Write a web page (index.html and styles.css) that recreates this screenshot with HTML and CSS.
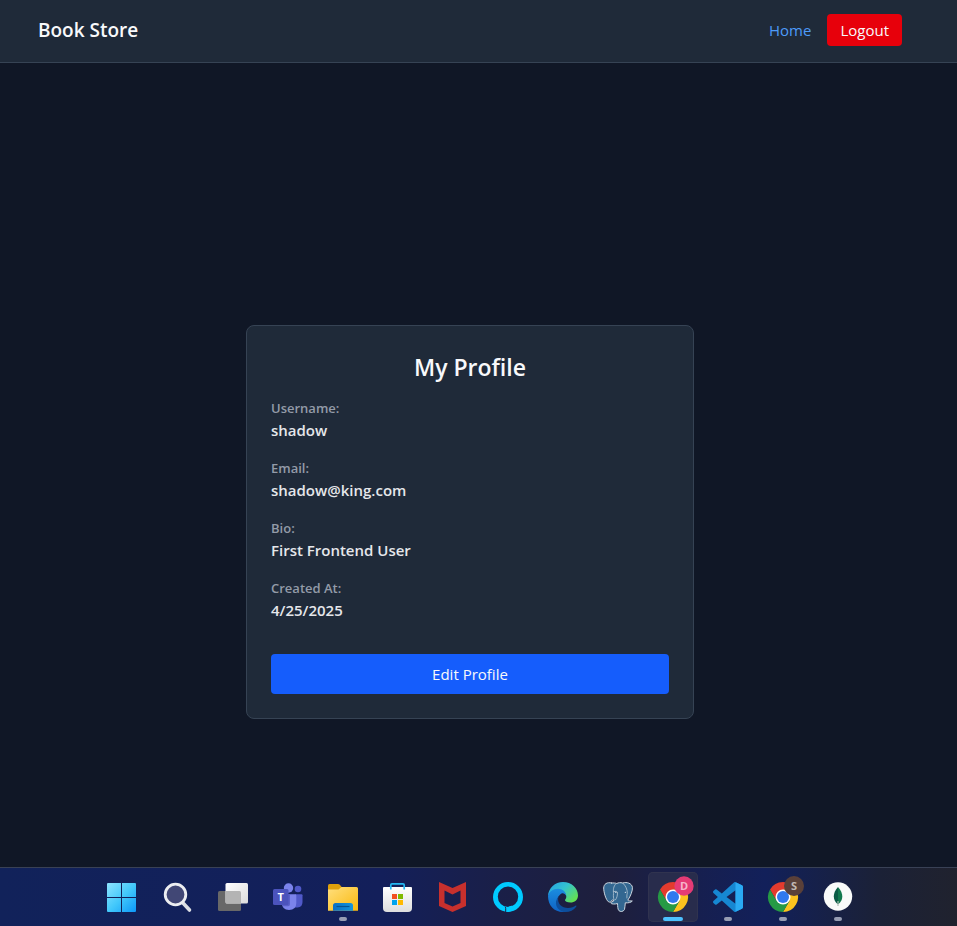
FILE: index.html
```html
<!DOCTYPE html>
<html lang="en">
<head>
<meta charset="utf-8">
<meta name="viewport" content="width=device-width, initial-scale=1">
<title>Book Store</title>
<link rel="stylesheet" href="styles.css">
</head>
<body>
<header class="site-header">
  <h1 class="brand">Book Store</h1>
  <nav class="site-nav">
    <a class="nav-link" href="#">Home</a>
    <button class="logout" type="button">Logout</button>
  </nav>
</header>

<main class="content">
  <section class="card">
    <h2 class="card-title">My Profile</h2>
    <dl class="details">
      <div><dt>Username:</dt><dd>shadow</dd></div>
      <div><dt>Email:</dt><dd>shadow@king.com</dd></div>
      <div><dt>Bio:</dt><dd>First Frontend User</dd></div>
      <div><dt>Created At:</dt><dd>4/25/2025</dd></div>
    </dl>
    <button class="edit" type="button">Edit Profile</button>
  </section>
</main>

<footer class="taskbar">
  <button class="task" type="button" aria-label="Start">
    <svg viewBox="0 0 50 50">
      <defs><linearGradient id="win" gradientUnits="userSpaceOnUse" x1="10" y1="11" x2="39" y2="40"><stop offset="0" stop-color="#8be3ff"/><stop offset=".5" stop-color="#42c8fb"/><stop offset="1" stop-color="#0a96f8"/></linearGradient></defs>
      <path fill="url(#win)" d="M10 11h13v14H9V12q0-1 1-1zM24 11h13q1 0 1 1v13H24zM9 26h14v14H10q-1 0-1-1zM24 26h14v13q0 1-1 1H24z"/>
    </svg>
  </button>
  <button class="task" type="button" aria-label="Search">
    <svg viewBox="0 0 50 50">
      <path d="M30 31l6.500 7" stroke="#dcdfe4" stroke-width="3.600" stroke-linecap="round"/>
      <circle cx="22.500" cy="22.500" r="10.300" fill="#414775" stroke="#eceef1" stroke-width="2.800"/>
    </svg>
  </button>
  <button class="task" type="button" aria-label="Task view">
    <svg viewBox="0 0 50 50">
      <defs><linearGradient id="tvw" x1="0" y1="0" x2="1" y2="1"><stop offset="0" stop-color="#fff"/><stop offset="1" stop-color="#dcdcdc"/></linearGradient></defs>
      <rect x="10" y="19" width="23" height="20" rx="1.500" fill="#686868"/>
      <rect x="17.500" y="11" width="22.500" height="20.500" rx="1.500" fill="url(#tvw)"/>
      <path fill="#b4b4b4" d="M17.500 19H31.500q1.500 0 1.500 1.500v11H19q-1.500 0-1.500-1.500z"/>
    </svg>
  </button>
  <button class="task" type="button" aria-label="Teams">
    <svg viewBox="0 0 50 50">
      <circle cx="35" cy="17" r="3.300" fill="#5059c9"/>
      <path fill="#5059c9" d="M32 22.300h6.500q1 0 1 1V30q0 5-5 5.500h-3z"/>
      <circle cx="25.500" cy="16" r="4.700" fill="#7b83eb"/>
      <path fill="#7b83eb" d="M19 22.300h13q1.300 0 1.300 1.300v7.400q0 7-7.300 7-7 0-7-7z"/>
      <path fill="#5a61c8" d="M19 22.300h8v10q0 2-2 2h-5.500q-.5-1.500-.5-3z"/>
      <rect x="10" y="17" width="15.500" height="16" rx="1.500" fill="#4b53bc"/>
      <text class="glyph" x="17.700" y="29" font-size="11">T</text>
    </svg>
  </button>
  <button class="task running" type="button" aria-label="File Explorer">
    <svg viewBox="0 0 50 50">
      <defs><linearGradient id="fold" x1="0" y1="0" x2="1" y2="1"><stop offset="0" stop-color="#ffdf7e"/><stop offset="1" stop-color="#fab90e"/></linearGradient><linearGradient id="fblue" x1="0" y1="0" x2="1" y2="0"><stop offset="0" stop-color="#0a6fc7"/><stop offset="1" stop-color="#1495dc"/></linearGradient></defs>
      <path fill="#dfa00b" d="M10 13.500Q10 12 11.500 12H20q1 0 1.800.8L24 15.500V21H10z"/>
      <path fill="url(#fold)" d="M10 17.500h10.500l3-2.500h15q1.500 0 1.500 1.500v22.200H10z"/>
      <path fill="url(#fblue)" d="M15 38.700V33.500q0-2.500 2.500-2.500h15q2.500 0 2.500 2.500v5.200z"/>
      <path d="M18.500 34.500h13" stroke="#075493" stroke-width="1.200"/>
    </svg>
  </button>
  <button class="task" type="button" aria-label="Store">
    <svg viewBox="0 0 50 50">
      <defs><linearGradient id="bag" x1="0" y1="0" x2="0" y2="1"><stop offset="0" stop-color="#fff"/><stop offset="1" stop-color="#dedede"/></linearGradient></defs>
      <path fill="url(#bag)" d="M11 15h27q1 0 1 1v20q0 4-4 4H14q-4 0-4-4V16q0-1 1-1z"/>
      <path d="M17.800 17.500V13q0-1.200 1.200-1.200h11Q31.200 11.800 31.200 13v4.500" fill="none" stroke="#25b9f2" stroke-width="1.700"/>
      <path fill="#f25022" d="M19 22h5v5h-5z"/><path fill="#7fba00" d="M25 22h5v5h-5z"/><path fill="#00a4ef" d="M19 28h5v5h-5z"/><path fill="#ffb900" d="M25 28h5v5h-5z"/>
    </svg>
  </button>
  <button class="task" type="button" aria-label="McAfee">
    <svg viewBox="0 0 50 50">
      <path fill="#c7302d" fill-rule="evenodd" d="M11 10l13.500 6L38 10v24l-13.500 6L11 34zM16.500 18.500V31l8 3.500 8-3.500V18.500l-8 4z"/>
    </svg>
  </button>
  <button class="task" type="button" aria-label="Alexa">
    <svg viewBox="0 0 50 50">
      <path fill="#00caff" fill-rule="evenodd" d="M25 10a15 15 0 1 1 0 30a15 15 0 1 1 0-30zM25 14.600a10.200 10.200 0 1 0 0 20.400a10.200 10.200 0 1 0 0-20.400z"/>
      <path fill="#00caff" d="M23 40v-3q0-1.500 1.500-2l5-1.500-2 6z"/>
      <path d="M21.800 34.500q.9.400.9 1.800v4" stroke="#1b1f46"/>
    </svg>
  </button>
  <button class="task" type="button" aria-label="Edge">
    <svg viewBox="0 0 50 50">
      <defs>
        <linearGradient id="eg" x1="0" y1="0" x2="1" y2=".7"><stop offset="0" stop-color="#239fe8"/><stop offset=".5" stop-color="#34c2cf"/><stop offset="1" stop-color="#63e052"/></linearGradient>
        <linearGradient id="eb" x1="0" y1="0" x2="0" y2="1"><stop offset="0" stop-color="#1b8de0"/><stop offset="1" stop-color="#0f62c4"/></linearGradient>
      </defs>
      <path fill="url(#eg)" d="M10 24C10.500 16 17 10 25 10c8.500 0 15 6 15 13.500 0 4.500-3.500 7-7.500 7-3.500 0-5.500-1.300-5.500-2.300s1.300-1.500 1.300-3.500c0-3.200-3.300-6.200-8.300-6.200-5 0-8.500 2.500-10 5.500z"/>
      <path fill="url(#eb)" d="M10 24c1-4.300 5-7.300 10-7.300 4.500 0 8.300 3 8.300 7.500-1-2.500-3-3.200-4.800-2.700-4 2.500-5 6.500-4 10s3.500 7 7.500 8.400C17 41 10 34 10 24z"/>
      <path fill="#0d4e9c" d="M20.500 24.500c-2 7 3.500 11.500 9.500 11.500 3.500 0 6-1.300 7.500-2.300.7-.3 1.200.3.700 1C35.500 38.500 31 40.500 26 40c-7-1.500-11-9-5.500-15.500z"/>
    </svg>
  </button>
  <button class="task" type="button" aria-label="PostgreSQL">
    <svg viewBox="0 0 50 50" stroke-linejoin="round" stroke-linecap="round">
      <path fill="#336791" stroke="#cdd6df" stroke-width="1" d="M18.500 11C14 9.800 10.800 12 10.700 16c0 4.500 2.300 12 4.800 13.800 1.500 1 2.700-.5 4-2l1.500.7c-1 1.500-3.700 1.500-3.300 2.500.6 1.300 4.500 1.300 6.800.5.300 3 .1 5.500 1.300 7 1.400 1.600 4.600 1.300 5.700-1 .6-2 .4-4.500.8-6.700 3 .3 5.800-.3 7-1.800-1.700-.2-3.700.2-4.500-.8 2.800-4 5-9.700 4.600-12.900-.6-4-5.600-5.600-9.600-4.300-2.500-.6-4.500-.4-6 .5-1.500-.6-3-.6-5.300-.5z"/>
      <path stroke="#b5c6d5" stroke-width=".8" d="M23 11.800c-3 2.500-2.700 6.500-2.500 9.700-.2 2.500-.2 4.700.7 6.500M30 11.300c2.700 2.500 4.500 6.200 4.300 10.200-.7 1.500-.2 3.200-.4 4.500M20.700 19.700c2-.8 3.800-.5 3.800 1.300-.2 3-.4 4.500-2 6.800"/>
      <path stroke="#dbe3ea" stroke-width="1.200" d="M22.800 20.400h.1M32.300 20.300h.1"/>
    </svg>
  </button>
  <button class="task active" type="button" aria-label="Chrome, profile D">
    <svg viewBox="0 0 50 50">
      <path fill="#e33b2e" d="M12 17.500a15 15 0 0 1 26 0H25L18.500 28.700z"/>
      <path fill="#fcc31e" d="M38 17.500A15 15 0 0 1 25 40l6.500-11.300L25 17.500z"/>
      <path fill="#269a45" d="M12 17.500A15 15 0 0 0 25 40l6.500-11.300h-13z"/>
      <circle cx="25" cy="25" r="7.500" fill="#fff"/><circle cx="25" cy="25" r="6" fill="#3079ee"/>
      <circle cx="36" cy="14" r="9.700" fill="#e53b75"/>
      <text class="glyph letter-d" x="36" y="18" font-size="11">D</text>
    </svg>
  </button>
  <button class="task running" type="button" aria-label="Visual Studio Code">
    <svg viewBox="0 0 50 50">
      <path transform="translate(10 10) scale(1.250)" fill="#1687d2" d="M23.150 2.587L18.210.21a1.494 1.494 0 0 0-1.705.29l-9.460 8.630-4.120-3.128a.999.999 0 0 0-1.276.057L.327 7.261A1 1 0 0 0 .326 8.740L3.899 12 .326 15.260a1 1 0 0 0 .001 1.479L1.650 17.940a.999.999 0 0 0 1.276.057l4.120-3.128 9.460 8.630a1.492 1.492 0 0 0 1.704.29l4.942-2.377A1.500 1.500 0 0 0 24 20.060V3.939a1.500 1.500 0 0 0-.85-1.352zm-5.146 14.861L10.826 12l7.178-5.448v10.896z"/>
      <path fill="#2aaaf3" d="M32.500 10.200l6.500 3q1 .5 1 1.700v20.200q0 1.200-1 1.700l-6.500 3z"/>
    </svg>
  </button>
  <button class="task running" type="button" aria-label="Chrome, profile S">
    <svg viewBox="0 0 50 50">
      <path fill="#e33b2e" d="M12 17.500a15 15 0 0 1 26 0H25L18.500 28.700z"/>
      <path fill="#fcc31e" d="M38 17.500A15 15 0 0 1 25 40l6.500-11.300L25 17.500z"/>
      <path fill="#269a45" d="M12 17.500A15 15 0 0 0 25 40l6.500-11.300h-13z"/>
      <circle cx="25" cy="25" r="7.500" fill="#fff"/><circle cx="25" cy="25" r="6" fill="#3079ee"/>
      <circle cx="36" cy="14" r="10" fill="#5a4039"/>
      <text class="glyph letter-s" x="36" y="18" font-size="11">S</text>
    </svg>
  </button>
  <button class="task running" type="button" aria-label="MongoDB Compass">
    <svg viewBox="0 0 50 50">
      <circle cx="25" cy="24.500" r="14.200" fill="#f9fbfa"/>
      <path fill="#11794e" d="M25 15c3 3.300 4.300 6.500 4.300 9.500 0 3.300-1.500 5.500-3.800 7.500H25z"/>
      <path fill="#0a5c45" d="M25 15c-3 3.300-4.200 6.500-4.200 9.500 0 3.300 1.500 5.500 3.700 7.500h.5z"/>
      <path d="M25 29v5" stroke="#a9bdb4" stroke-width="1.200"/>
    </svg>
  </button>
</footer>
</body>
</html>
```
FILE: styles.css
```css
* {
  box-sizing: border-box;
}

body {
  margin: 0;
  min-height: 100vh;
  display: flex;
  flex-direction: column;
  background: #101726;
  color: #f8f9fb;
  font-family: "Open Sans", "Noto Sans", sans-serif;
  font-size: 15px;
  line-height: 24px;
}

h1, h2, dl, dd {
  margin: 0;
}

button {
  border: 0;
  color: inherit;
  font: inherit;
}

.site-header {
  display: flex;
  align-items: center;
  justify-content: space-between;
  padding: 14px 55px 16px 38px;
  background: #1f2a39;
  border-bottom: 1px solid #364354;
}

.brand {
  font-size: 19px;
  font-weight: 600;
  line-height: 28px;
}

.site-nav {
  display: flex;
  align-items: center;
  gap: 16px;
}

.nav-link {
  color: #4d9bfa;
  text-decoration: none;
}

.logout {
  padding: 4px 13px;
  border-radius: 4px;
  background: #e7000b;
}

.content {
  flex: 1;
  display: flex;
  align-items: center;
  justify-content: center;
  padding: 114px 17px 0 0;
}

.card {
  width: 100%;
  max-width: 448px;
  padding: 24px;
  background: #1f2a39;
  border: 1px solid #364354;
  border-radius: 8px;
}

.card-title {
  margin-bottom: 14px;
  font-size: 23px;
  font-weight: 600;
  line-height: 34px;
  text-align: center;
}

.details {
  display: grid;
  gap: 16px;
  margin-bottom: 32px;
}

.details dt {
  color: #939ba8;
  font-size: 13px;
  font-weight: 600;
  line-height: 20px;
}

.details dd {
  color: #e5e7eb;
  font-weight: 600;
}

.edit {
  width: 100%;
  padding: 8px 16px;
  border-radius: 4px;
  background: #155dfc;
}

.taskbar {
  display: flex;
  justify-content: center;
  gap: 5px;
  padding: 4px 0 4px 4px;
  border-top: 1px solid #394155;
  background: linear-gradient(90deg, #11225a 0%, #131f5a 40%, #1a1f48 52%, #1e1f3c 64%, #171f4e 72%, #12205a 80%, #1b2136 92%, #20222e 100%);
}

.task {
  position: relative;
  width: 50px;
  height: 50px;
  padding: 0;
  border-radius: 5px;
  background: transparent;
}

.task svg {
  display: block;
  width: 100%;
  height: 100%;
  fill: none;
}

.task.active {
  background: #282c4c;
  box-shadow: inset 0 0 0 1px #30334f;
}

.task.running::after,
.task.active::after {
  content: "";
  position: absolute;
  bottom: 1px;
  left: 50%;
  width: 8px;
  height: 4px;
  border-radius: 2px;
  background: #979db3;
  transform: translateX(-50%);
}

.task.active::after {
  width: 20px;
  background: #4cc2ff;
}

.glyph {
  fill: #fff;
  font-family: "Open Sans", sans-serif;
  font-weight: 700;
  text-anchor: middle;
}

.letter-d {
  fill: #f8b4cd;
}

.letter-s {
  fill: #c2b8b4;
}
```
